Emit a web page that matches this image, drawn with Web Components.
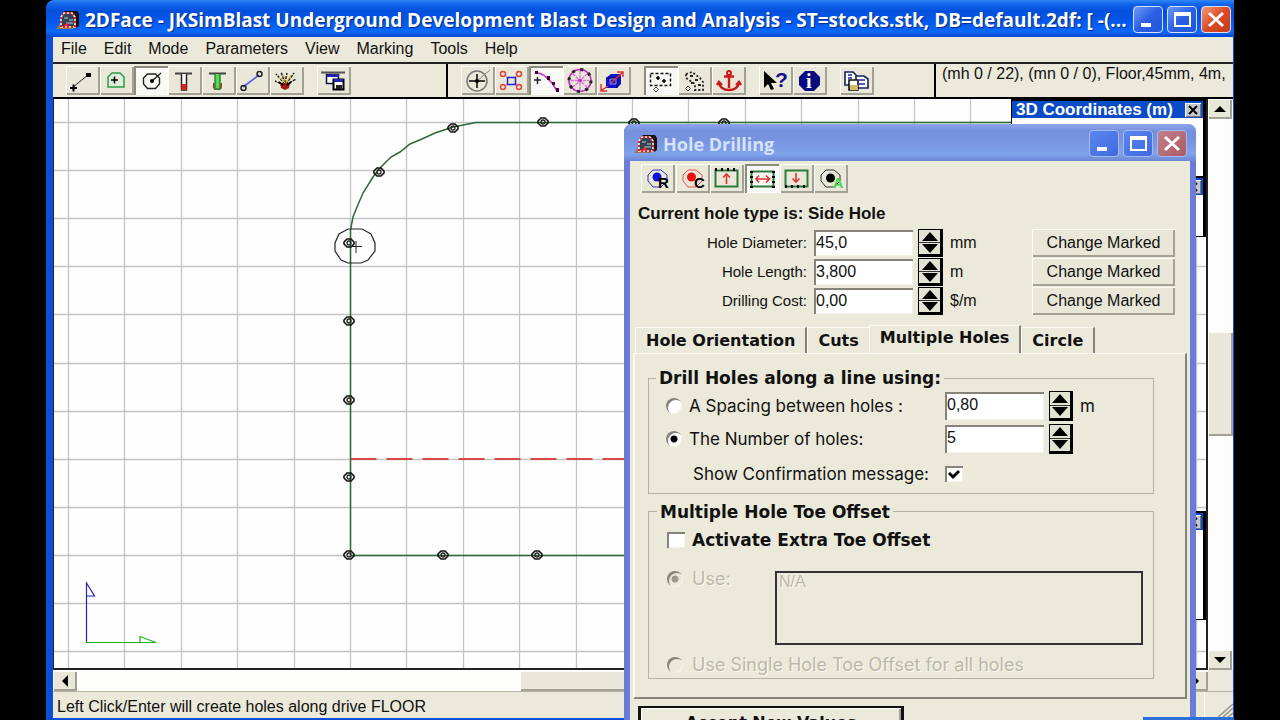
<!DOCTYPE html>
<html lang="en">
<head>
<meta charset="utf-8">
<title>2DFace - JKSimBlast</title>
<style>
  html, body { height: 100%; }
  body { margin: 0; background: #000; overflow: hidden; font: 16px/20px "Liberation Sans", Arial, sans-serif; color: #111; }
</style>
</head>
<body>
<app-window></app-window>

<script>
const ICONS = {
  line: `<path d="M7 21 22 9" stroke="#222"/><path d="M4 22h7M7.500 18.500v7" stroke="#000" stroke-width="2"/><path d="M20 7h5v4h-5z" fill="#000"/>`,
  outline: `<path d="M8 21V11l4-4h8l4 4v10z" stroke="#2f9a44" fill="#dff0dc" stroke-width="1.500"/><path d="M11 14h7M14.500 10.500v7" stroke="#000" stroke-width="1.600"/>`,
  circle: `<path d="M13.500 8h8l4 4v6l-4 4.500h-8l-4-4.500v-6z" stroke="#222" stroke-width="1.400"/><path d="M18 15 27 7" stroke="#222" stroke-width="1.400"/><circle cx="18" cy="15" r="2" fill="#000"/>`,
  charge: `<path d="M7 7.500h17" stroke="#444" stroke-width="2"/><path d="M13.500 8v16h5V8" fill="#fff" stroke="#222" stroke-width="1.500"/><path d="M13.500 18h5v6h-5z" fill="#d22"/>`,
  charged: `<path d="M7 7.500h17" stroke="#444" stroke-width="2"/><path d="M11 17v5l2 2h5l2-2v-5" fill="#d22"/><path d="M13 8v15h5V8" fill="#5ad84c" stroke="#284" stroke-width="1.500"/>`,
  connect: `<path d="M7 21 23 9" stroke="#5a5af0" stroke-width="1.600"/><circle cx="7.500" cy="22" r="2.500" stroke="#222" stroke-width="1.500"/><circle cx="23.500" cy="8" r="2.500" stroke="#222" stroke-width="1.500"/>`,
  burst: `<path d="m15 18-9-10m9 9L11 6m4 11 2-10m-1 11 8-11m-8 12 10-6M14 19 5 15" stroke="#222" stroke-width="1.500" stroke-dasharray="3 1"/><path d="m15 17-6-6m7 6 5-8m-6 7-1-7" stroke="#e0c020"/><path d="M10 17h10l-1 5-4 2-4-2z" fill="#a01818"/><path d="M9 16l4 3m8-3-4 3" stroke="#000" stroke-width="2"/>`,
  windows: `<path d="M4 6.500h24" stroke="#555" stroke-width="2"/><path d="M9.500 8.500h12v9h-12z" fill="#fff" stroke="#113" stroke-width="1.500"/><path d="M10 8h12v3H10z" fill="#22a"/><path d="M16.500 13.500h10v10h-10z" fill="#fff" stroke="#000" stroke-width="2"/><path d="M17 13h9v3h-9z" fill="#22a"/><path d="M19 19h6v4h-6z" fill="#222"/>`,
  target: `<circle cx="16" cy="15" r="10" stroke="#777" stroke-width="1.500"/><path d="M16 8v14M8 15h16" stroke="#000" stroke-width="1.500"/><path d="m16 15 13-11" stroke="#888"/><circle cx="16" cy="15" r="2" fill="#000"/>`,
  cut: `<g stroke="#d44" stroke-width="1.500"><circle cx="8" cy="8" r="2.500"/><circle cx="24" cy="8" r="2.500"/><circle cx="8" cy="21" r="2.500"/><circle cx="24" cy="21" r="2.500"/></g><path d="m11 10 2 2m8-2-2 2m-8 7 2-2m8 2-2-2" stroke="#d88"/><path d="M12.500 11.500h8v7h-8z" stroke="#22d" stroke-width="1.500"/>`,
  arc: `<path d="M7 7q6 0 10 4t6 6q2 3 5 8" stroke="#c32bc3" stroke-width="1.600"/><path d="M5 14h7M8.500 11v7" stroke="#222" stroke-width="1.500"/><path d="M6 5h3v3H6zM18 10h3v4h-3zM23 16h3v3h-3zM27 22h3v4h-3z" fill="#404"/>`,
  wheel: `<circle cx="17" cy="14.500" r="11" stroke="#c32bc3" stroke-width="1.600"/><circle cx="17" cy="14.500" r="11" stroke="#222" stroke-width="3" stroke-dasharray="3 5.640"/><path d="M17 5v19M8 14.500h18M10 8l14 13M24 8 10 21" stroke="#e06adf" stroke-width="1.300" stroke-dasharray="3 1"/><circle cx="17" cy="14.500" r="2" fill="#c32bc3"/>`,
  scale: `<path d="M9 12l5-4h10v10l-4 4H9z" fill="#11c"/><path d="M9 12h11v10M20 12l4-4" stroke="#003"/><path d="M13 13h6v5h-6z" stroke="#99f"/><path d="m14 17 11-10M20 6h6v5M11 20l-6 4M4 18v7h6" stroke="#d33" stroke-width="1.500"/>`,
  box: `<path d="M6.500 7.500h20v12h-20z" stroke="#111" stroke-width="1.500" stroke-dasharray="3 2"/><path d="M12 12h4M14 10v4M18 15h4M20 13v4" stroke="#000" stroke-width="1.600"/><path d="m12 21 2.500 2.500L12 26l-2.500-2.500z" stroke="#444"/>`,
  poly: `<path d="m8 8 6-2 8 6 3 4v8h-8v-6L8 12z" stroke="#222" stroke-width="1.800" stroke-dasharray="2 2"/><path d="M12 10h3M17 14h3M20 19h3M13 17h3" stroke="#222" stroke-width="2"/><path d="m10 20 2.500 2.500L10 25l-2.500-2.500z" stroke="#444"/>`,
  anchor: `<path d="M17 8v14M12 10.500h10M7 17c1 4 4 7 10 7s9-3 10-7M5 19l2-3 3 3M24 19l3-3 2 3" stroke="#c81818" stroke-width="2.400"/><circle cx="17" cy="7" r="2" stroke="#c81818" stroke-width="2"/>`,
  help: `<path d="M5 5v17l4-4 3 6 3-1-3-6h6z" fill="#000"/><text x="16" y="21" font-size="21" font-weight="700" fill="#12128a">?</text>`,
  info: `<path d="M12 5h9l6 6v8l-6 6h-9l-6-6v-8z" fill="#0a0a80"/><text x="13" y="22" font-size="20" font-weight="700" font-family="Liberation Serif" fill="#fff">i</text>`,
  copy: `<path d="M5 6h8l3 3v10H5zM16 10h8l4 3v9H16z" fill="#fff" stroke="#125" stroke-width="1.600"/><path d="M8 9h4M8 12h4M19 14h6M19 18h6" stroke="#22a" stroke-width="1.500"/><path d="M9 14h9v10H9z" fill="#fff" stroke="#111" stroke-width="1.600"/><path d="M10 19h8v5h-8z" fill="#cdbb68"/>`,
  ringR: `<path d="M12 6h8l6 5v6l-6 6h-8l-5-6v-6z" stroke="#33a"/><circle cx="16" cy="13" r="4.500" fill="#11d"/><text x="17" y="24" font-size="15" font-weight="700" fill="#000">R</text>`,
  ringC: `<path d="M12 6h8l6 5v6l-6 6h-8l-5-6v-6z" stroke="#d55"/><circle cx="15.500" cy="13" r="4.500" fill="#e11"/><text x="18" y="24" font-size="15" font-weight="700" fill="#000">C</text>`,
  up: `<path d="M5.500 6.500h22v16h-22z" stroke="#2d7a3c" stroke-width="2"/><path d="M5 5.500h23" stroke="#000" stroke-width="3" stroke-dasharray="2 4"/><path d="M16.500 20V10m-3.500 3.500 3.500-3.500 3.500 3.500" stroke="#d33" stroke-width="1.600"/>`,
  sides: `<path d="M6.500 7.500h22v15h-22z" stroke="#2d7a3c" stroke-width="2"/><path d="M6.500 7v17M28.500 7v17" stroke="#000" stroke-width="3" stroke-dasharray="2 3"/><path d="M11 15h13m-10-3.500L11 15l3 3.500m7-7 3.500 3.500-3.500 3.500" stroke="#d33" stroke-width="1.600"/>`,
  down: `<path d="M5.500 6.500h22v16h-22z" stroke="#2d7a3c" stroke-width="2"/><path d="M5 22.500h23" stroke="#000" stroke-width="3" stroke-dasharray="2 4"/><path d="M16 9v9m-3.500-3.500 3.500 3.500 3.500-3.500" stroke="#d33" stroke-width="1.600"/>`,
  ringA: `<path d="M12 6h8l6 5v6l-6 6h-8l-5-6v-6z" stroke="#333"/><circle cx="16.500" cy="14" r="4.500" fill="#000"/><text x="19" y="24" font-size="14" font-weight="700" fill="#3bd84a">A</text>`,
};
const BEVEL = `border: 0; box-shadow: inset 1px 1px #fdfdf8, inset -2px -2px #a3a193; background: #e9e8d8;`;

function element(name, render) {
  customElements.define(name, class extends HTMLElement {
    constructor() { super(); this.attachShadow({ mode: 'open' }); }
    connectedCallback() { this.shadowRoot.innerHTML = render(this); }
  });
}

element('tool-button', el => `
<style>
  :host { display: block; flex: none; width: 34px; height: 29px; }
  button { display: block; width: 100%; height: 100%; padding: 0; ${BEVEL} }
  :host([pressed]) button { background: #f8f8f4; box-shadow: inset 2px 2px #8d8b80, inset -1px -1px #fff; }
  svg { display: block; font-family: "Liberation Sans", sans-serif; }
</style>
<button aria-label="${el.getAttribute('icon')}"><svg width="34" height="29" fill="none">${ICONS[el.getAttribute('icon')]}</svg></button>`);

element('tool-group', () => `
<style>:host { display: flex; }</style><slot></slot>`);

element('title-bar', () => `
<style>
  :host { display: flex; align-items: center; box-sizing: border-box; height: 37px; padding: 3px 3px 1px 10px;
    color: #fff; font: 700 19px/24px "Open Sans", "Noto Sans", sans-serif; text-shadow: 1px 1px 1px #0a2a80;
    background: linear-gradient(#2f86f4, #1163ea 12%, #0450dc 30%, #0459ee 60%, #0a68fc 85%, #0548cc); border-radius: 8px 0 0 0; }
  :host([inactive]) { color: #d7e2fa; text-shadow: none; border-radius: 8px 8px 0 0; padding-right: 9px; font-size: 18px;
    background: linear-gradient(#8ba4ec, #7590dd 20%, #7893e0 45%, #7fa3ea 80%, #6c86d6); }
  .logo { flex: none; margin-right: 5px; }
  span { flex: 1; min-width: 0; white-space: nowrap; overflow: hidden; }
  nav { display: flex; gap: 4px; }
  button { width: 30px; height: 27px; padding: 0; border: 1px solid #d5e2fb; border-radius: 4px;
    background: linear-gradient(135deg, #6f9af8, #2a5fe4 50%, #2258d8); }
  button.close { background: linear-gradient(135deg, #f09a7c, #dc4a26 50%, #c63c18); }
  :host([inactive]) button { border-color: #a6baf0; background: linear-gradient(135deg, #5a85ee, #416ae0); }
  :host([inactive]) button.close { background: linear-gradient(135deg, #c0808c, #ac5a66); }
  button svg { display: block; margin: auto; }
</style>
<svg class="logo" width="24" height="20" viewBox="0 0 24 20" fill="none"><path d="M0 19 5 12h15l-3 7z" fill="#98745c"/><path d="M6 4l3-3h12l2 3v12l-3 2H7z" fill="#181010"/><path d="M5 17V7l3-4h8l3 4v10z" fill="#345" stroke="#fff" stroke-width="1.500"/><path d="M5 17V7l3-4h8l3 4v10z" stroke="#d22" stroke-width="2" stroke-dasharray="2 2"/><path d="M8 8h4M13 10h4M10 13h7" stroke="#bcd" /><path d="M6 17l5-4 2 3z" fill="#f22"/></svg>
<span><slot></slot></span>
<nav>
  <button aria-label="Minimize"><svg width="28" height="25"><path d="M7 16h10v4H7z" fill="#fff"/></svg></button>
  <button aria-label="Maximize"><svg width="28" height="25" fill="none" stroke="#fff"><path d="M7 7h15v12H7z" stroke-width="2"/><path d="M6 7h17" stroke-width="4"/></svg></button>
  <button class="close" aria-label="Close"><svg width="28" height="25"><path d="M7 6l14 13M21 6 7 19" stroke="#fff" stroke-width="3"/></svg></button>
</nav>`);

element('menu-bar', () => `
<style>
  :host { display: flex; gap: 17px; height: 25px; padding: 0 8px; align-items: flex-start; background: #ebe9d9; }
  button { border: 0; padding: 2px 0 0; background: none; font: inherit; color: inherit; line-height: 20px; }
</style>
${['File', 'Edit', 'Mode', 'Parameters', 'View', 'Marking', 'Tools', 'Help'].map(t => `<button>${t}</button>`).join('')}`);

element('tool-strip', () => {
  const group = (names, pressed) => `<tool-group>${names.map(n => `<tool-button icon="${n}" ${n === pressed ? 'pressed' : ''}></tool-button>`).join('')}</tool-group>`;
  return `
<style>
  :host { display: flex; height: 33px; border-top: 2px solid #222; border-bottom: 2px solid #000; background: #ebe9d9; }
  section { display: flex; align-items: center; gap: 13px; box-sizing: border-box; padding: 0 13px; border-right: 2px solid #000; }
  .edit { width: 395px; }
  .view { width: 488px; }
  output { flex: 1; min-width: 0; padding-left: 6px; white-space: nowrap; overflow: hidden; }
</style>
<section class="edit">${group(['line', 'outline', 'circle', 'charge', 'charged', 'connect', 'burst'], 'circle')}${group(['windows'])}</section>
<section class="view">${group(['target', 'cut', 'arc', 'wheel', 'scale'], 'arc')}${group(['box', 'poly', 'anchor'], 'box')}${group(['help', 'info'])}${group(['copy'])}</section>
<output>(mh 0 / 22), (mn 0 / 0), Floor,45mm, 4m,</output>`;
});

element('drive-drawing', () => {
  let grid = '';
  for (let i = 0; i < 21; i++) grid += `<path d="M${Math.round(14 + i * 56.4)}.500 0V600"/>`;
  for (let i = 0; i < 12; i++) grid += `<path d="M0 ${Math.round(23 + i * 48.1)}.500H1160"/>`;
  const holes = [[295, 144], [295, 222], [295, 301], [295, 378], [295, 456], [389, 456], [483, 456], [325, 73], [399, 29], [489, 23], [580, 24], [670, 24]]
    .map(([x, y]) => `<g transform="translate(${x} ${y})"><path d="M-2-4h4l3 3v2l-3 3h-4l-3-3v-2z" stroke="#111" stroke-width="1.600"/><circle r="2" stroke="#222" stroke-width="1.300"/></g>`).join('');
  return `
<style>:host { display: block; overflow: hidden; background: #fefefe; } svg { display: block; }</style>
<svg width="100%" height="100%" fill="none" role="img" aria-label="Drive outline">
  <g stroke="#c4c4c4" stroke-width="1.300">${grid}</g>
  <path d="M296.500 360H1000" stroke="#d84848" stroke-width="2" stroke-dasharray="26 10"/>
  <path d="M296.500 456V131L299 118 303 108 309 94 319 78 326 69 337 58 346 53 356 45 368 40 381 34 399 28 422 23.500H1000M296.500 456.500H1000" stroke="#2b6a35" stroke-width="1.500"/>
  ${holes}
  <path d="M294 130h14l9 5 4 9v8l-7 9-7 3h-13l-7-3-6-9v-8l4-9z" stroke="#222" stroke-width="1.200"/>
  <path d="M296 147.500h12M302 142v12" stroke="#222"/>
  <path d="M32.500 543V484l8 13h-8" stroke="#2424b0" stroke-width="1.200"/>
  <path d="M32 543.500h70l-16-6v6" stroke="#22b022" stroke-width="1.200"/>
</svg>`;
});

element('float-panel', () => `
<style>
  :host { display: flex; flex-direction: column; box-sizing: border-box; border: solid #000; border-width: 2px 3px 1px 1px; background: #fff; }
  header { display: flex; align-items: center; height: 17px; padding: 0 2px 0 4px; background: #0a4bc8; color: #fff; font-weight: 700; font-size: 17px; line-height: 17px; white-space: nowrap; }
  button { display: block; width: 16px; height: 14px; margin: 0 0 0 auto; padding: 0; border: 0; background: #c8c8c8; box-shadow: inset 1px 1px #fff, inset -1px -1px #777; }
  svg { display: block; margin: auto; }
</style>
<header><slot></slot><button aria-label="Close panel"><svg width="10" height="10"><path d="M1 1l8 8M9 1 1 9" stroke="#000" stroke-width="2"/></svg></button></header>`);

element('scroll-bar', () => `
<style>
  :host { display: flex; background: #fdfdfb; }
  :host([vertical]) { flex-direction: column; }
  button { flex: none; width: 24px; height: 20px; padding: 0; ${BEVEL} }
  svg { display: block; margin: auto; }
  .rest { flex: 1; display: flex; }
  :host([vertical]) .rest { flex-direction: column; }
  i { display: block; ${BEVEL} }
  .before { flex: var(--before); }
  i { flex: var(--thumb); }
  .after { flex: var(--after); }
  .next svg { transform: rotate(180deg); }
  :host(:not([vertical])) .prev svg { transform: rotate(-90deg); }
  :host(:not([vertical])) .next svg { transform: rotate(90deg); }
</style>
<button class="prev" aria-label="Scroll back"><svg width="12" height="6"><path d="M0 6 6 0l6 6z"/></svg></button>
<div class="rest"><div class="before"></div><i></i><div class="after"></div></div>
<button class="next" aria-label="Scroll forward"><svg width="12" height="6"><path d="M0 6 6 0l6 6z"/></svg></button>`);

element('status-bar', () => `
<style>
  :host { display: flex; align-items: center; height: 26px; padding: 0 0 0 4px; background: #ebe9d9; border-top: 1px solid #b5b3a5; }
  span { flex: 1; padding-top: 3px; }
  svg { flex: none; border-left: 1px solid #fff; }
</style>
<span>Left Click/Enter will create holes along drive FLOOR</span>
<svg width="28" height="26" stroke="#99978a" stroke-width="1.500"><path d="M12 26 28 12M17 26 28 16M22 26 28 21"/></svg>`);

element('spin-box', () => `
<style>
  :host { display: flex; align-items: center; gap: 5px; }
  ::slotted(input) { box-sizing: border-box; width: 99px; height: var(--field-h, 26px); margin: 0; padding: 0 2px 1px 2px; border: 0; border-radius: 0; outline: 0;
    font: 16px/20px "Liberation Sans", sans-serif; color: #111; background: #fff; box-shadow: inset 2px 2px #85837a, inset -1px -1px #f4f2e6; }
  div { display: flex; flex-direction: column; justify-content: center; gap: 1px; box-sizing: border-box; width: var(--spin-w, 26px); height: calc(var(--field-h, 26px) + 2px); border: 2px solid #000; border-width: 1px 3px 3px 1px; background: #e3e2d3; }
  button { display: block; height: 10px; padding: 0; border: 0; background: none; }
  button + button { border-top: 1px solid #333; padding-top: 1px; height: 11px; }
  svg { display: block; margin: auto; }
</style>
<slot></slot>
<div><button aria-label="Increase"><svg width="18" height="9"><path d="M1 9 9 0l8 9z"/></svg></button><button aria-label="Decrease"><svg width="18" height="9"><path d="M1 0h16L9 9z"/></svg></button></div>`);

element('hole-settings', () => `
<style>
  :host { display: grid; grid-template-columns: 173px 129px 1fr 143px; column-gap: 7px; row-gap: 1px; align-items: center; padding: 0 12px 0 1px; }
  label { text-align: right; font-size: 15px; }
  .change { height: 28px; padding: 0; font: inherit; color: inherit; ${BEVEL} }
</style>
${[['Hole Diameter:', '45,0', 'mm'], ['Hole Length:', '3,800', 'm'], ['Drilling Cost:', '0,00', '$/m']].map(([name, value, unit], i) => `
<label for="f${i}">${name}</label><spin-box><input id="f${i}" value="${value}"></spin-box><span>${unit}</span><button class="change">Change Marked</button>`).join('')}`);

element('tab-strip', () => `
<style>
  :host { display: flex; align-items: flex-end; height: 28px; padding-left: 2px; }
  button { height: 26px; padding: 0 10px; border: solid #fbfaf2; border-width: 1px 0 0 1px; background: #ebe9d9; font: 700 16px/22px "DejaVu Sans", sans-serif; color: #111; white-space: nowrap; }
  button.edge { border-right: 2px solid #85837a; }
  button[aria-selected=true] { height: 28px; padding-bottom: 4px; }
</style>
<button role="tab" class="edge">Hole Orientation</button><button role="tab">Cuts</button><button role="tab" class="edge" aria-selected="true">Multiple Holes</button><button role="tab" class="edge">Circle</button>`);

element('multiple-holes', () => `
<style>
  :host { display: flex; flex-direction: column; gap: 7px; box-sizing: border-box; height: 346px; padding: 13px 31px 18px 13px; border: solid #fbfaf2; border-width: 1px 2px 2px 2px; border-right-color: #85837a; border-bottom-color: #85837a;
    font: 17px/22px Inter, "Liberation Sans", sans-serif; --field-h: 28px; --spin-w: 24px; }
  fieldset { display: grid; box-sizing: border-box; min-width: 0; margin: 0; border: 1px solid #b5b3a5; box-shadow: none; }
  legend { margin-left: -10px; padding: 0 3px; }
  legend, b { font: 700 17px/22px "DejaVu Sans", sans-serif; }
  .line { height: 128px; grid-template-columns: 16px 249px 128px 1fr; grid-template-rows: 33px 33px 1fr; column-gap: 7px; align-items: center; padding: 0 0 0 17px; }
  .line > .confirm { grid-column: 1 / 3; text-align: right; padding-right: 9px; }
  .toe { height: 180px; grid-template-columns: 18px 76px 1fr; grid-template-rows: 34px 96px 24px; column-gap: 7px; padding: 0 10px 0 18px; align-items: center; }
  .toe b, .toe .all { grid-column: 2 / 4; }
  .toe label.disabled { font-size: 18px; }
  .disabled { color: #bab8a9; text-shadow: 1px 1px #fbfaf2; }
  input[type=radio], input[type=checkbox] { appearance: none; width: 16px; height: 16px; margin: 0; background: #fff; box-shadow: inset 2px 2px #85837a, inset -1px -1px #f4f2e6; }
  input[type=radio] { border-radius: 50%; }
  input[type=radio]:checked { background: radial-gradient(circle, #000 3px, #fff 4px); }
  input[type=radio]:disabled { background: #ebe9d9; }
  input[type=radio]:disabled:checked { background: radial-gradient(circle, #9b998c 3px, #ebe9d9 4px); }
  input[type=checkbox] { width: 18px; }
  input[type=checkbox]:checked { background: #fff url("data:image/svg+xml,%3Csvg xmlns='http://www.w3.org/2000/svg' width='18' height='16'%3E%3Cpath d='M4 7l4 4 6-6' fill='none' stroke='%23000' stroke-width='3'/%3E%3C/svg%3E") no-repeat; }
  .toe textarea { align-self: start; box-sizing: border-box; width: 100%; height: 74px; margin: 14px 0 0; padding: 0 2px; border: 2px solid #333; border-radius: 0; background: #ebe9d9; resize: none; font: 16px/18px "Liberation Sans", sans-serif; }
  .use { align-self: start; padding-top: 11px; }
  input.use { padding: 0; margin-top: 14px; }
</style>
<fieldset class="line">
  <legend>Drill Holes along a line using:</legend>
  <input type="radio" name="by" id="spacing"><label for="spacing">A Spacing between holes :</label>
  <spin-box><input aria-label="Spacing" value="0,80"></spin-box><span>m</span>
  <input type="radio" name="by" id="number" checked><label for="number">The Number of holes:</label>
  <spin-box><input aria-label="Number" value="5"></spin-box><span></span>
  <label class="confirm" for="confirm">Show Confirmation message:</label><input type="checkbox" id="confirm" checked>
</fieldset>
<fieldset class="toe">
  <legend>Multiple Hole Toe Offset</legend>
  <input type="checkbox" id="extra"><b><label for="extra">Activate Extra Toe Offset</label></b>
  <input class="use" type="radio" name="toe" id="use" checked disabled><label class="use disabled" for="use">Use:</label>
  <textarea class="disabled" aria-label="Toe offset" disabled>N/A</textarea>
  <input type="radio" name="toe" id="single" disabled><label class="all disabled" for="single">Use Single Hole Toe Offset for all holes</label>
</fieldset>`);

element('hole-dialog', () => `
<style>
  :host { display: block; box-sizing: border-box; background: #ebe9d9; border: solid #6a7cd8; border-width: 0 6px; border-radius: 8px 8px 0 0; }
  title-bar { margin: 0 -6px; }
  .types { display: grid; grid-template-columns: repeat(6, 1fr); width: 208px; padding: 3px 11px 0; }
  .body { padding: 0 3px; }
  h2 { margin: 10px 5px 4px; font: 700 17px/22px "Liberation Sans", sans-serif; }
  tab-strip { margin-top: 10px; }
  .accept { display: block; width: 266px; height: 34px; margin: 7px 5px; padding: 0; border: 2px solid #111; border-width: 2px 3px; background: #ebe9d9; box-shadow: inset 1px 1px #fff, inset -2px 0 #a3a193; font: 700 16px/22px "DejaVu Sans", sans-serif; color: #111; }
</style>
<title-bar inactive>Hole Drilling</title-bar>
<div class="types">${['ringR', 'ringC', 'up', 'sides', 'down', 'ringA'].map(n => `<tool-button icon="${n}" ${n === 'sides' ? 'pressed' : ''}></tool-button>`).join('')}</div>
<div class="body">
  <h2>Current hole type is: Side Hole</h2>
  <hole-settings></hole-settings>
  <tab-strip role="tablist"></tab-strip>
  <multiple-holes></multiple-holes>
  <button class="accept">Accept New Values</button>
</div>`);

element('app-window', () => `
<style>
  :host { display: flex; flex-direction: column; position: relative; box-sizing: border-box; height: 100vh; margin: 0 46px; padding-bottom: 2px; overflow: hidden; border-radius: 8px 0 0 0; background: #0b4fd8; }
  .client { flex: 1; min-height: 0; display: flex; flex-direction: column; margin: 0 1px 0 7px; background: #ebe9d9; }
  .work { flex: 1; min-height: 0; display: grid; grid-template-columns: 1fr 25px; grid-template-rows: 1fr 21px; }
  .view { position: relative; display: grid; overflow: hidden; border: solid #222; border-width: 0 2px 2px 1px; }
  .vertical { --before: 214; --thumb: 104; --after: 215; }
  .horizontal { --before: 443; --thumb: 380; --after: 284; padding-top: 1px; }
  float-panel { position: absolute; right: 0; width: 195px; }
  .coords { top: 0; height: 80px; }
  .second { top: 77px; height: 61px; }
  .third { top: 412px; height: 109px; }
  hole-dialog { position: absolute; top: 124px; right: 38px; width: 572px; height: 620px; }
  .taskbar { position: absolute; right: 0; bottom: 0; width: 91px; height: 3px; background: #2a70d8; }
</style>
<title-bar>2DFace - JKSimBlast Underground Development Blast Design and Analysis - ST=stocks.stk, DB=default.2df: [ -(...</title-bar>
<div class="client">
  <menu-bar></menu-bar>
  <tool-strip></tool-strip>
  <div class="work">
    <div class="view">
      <drive-drawing></drive-drawing>
      <float-panel class="coords">3D Coordinates (m)</float-panel>
      <float-panel class="second"></float-panel>
      <float-panel class="third"></float-panel>
    </div>
    <scroll-bar class="vertical" vertical></scroll-bar>
    <scroll-bar class="horizontal"></scroll-bar>
  </div>
  <status-bar></status-bar>
</div>
<hole-dialog></hole-dialog>
<div class="taskbar"></div>`);
</script>
</body>
</html>
